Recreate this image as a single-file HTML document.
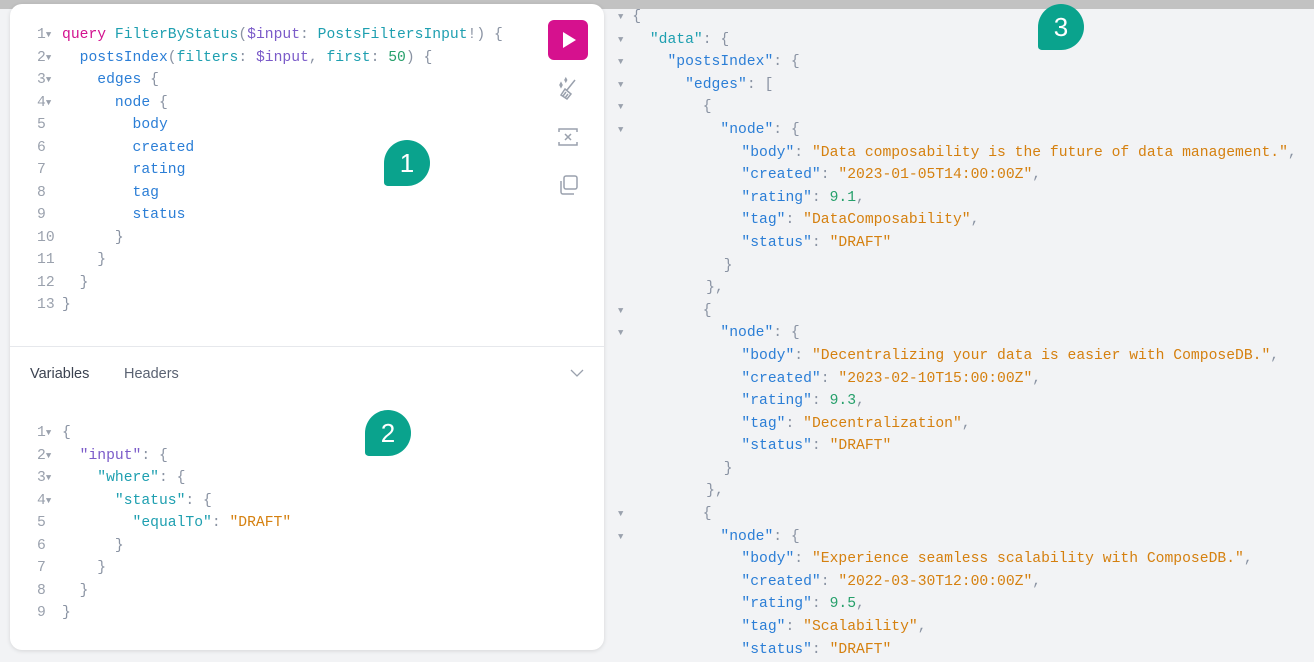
<!DOCTYPE html>
<html><head><style>
body{margin:0;width:1314px;height:662px;background:#f2f3f5;position:relative;overflow:hidden;font-family:"Liberation Sans",sans-serif}
.topbar{position:absolute;left:0;top:0;width:1314px;height:9px;background:#c2c2c2}
.panel{position:absolute;left:10px;top:4px;width:594px;height:646px;background:#fff;border-radius:12px;box-shadow:0 1px 4px rgba(0,0,0,.12)}
.code{position:absolute;font-family:"Liberation Mono",monospace;font-size:14.7px;white-space:pre;line-height:22.5px;color:#8a93a3}
.ln{display:inline-block;width:25px;text-align:left;color:#9aa1ad}
.k{color:#d3128f}.t{color:#1e9fb0}.v{color:#7b5bc9}.f{color:#2b7ed6}.n{color:#26a06b}.s{color:#d5800f}.p{color:#8a93a3}
.tri{font-size:9px;color:#9aa1ad;display:inline-block;line-height:0;vertical-align:top;margin-top:11px}
.right{position:absolute;left:618px;top:6px;font-family:"Liberation Mono",monospace;font-size:14.7px;line-height:22.6px;white-space:pre;color:#8a93a3}
.bubble{position:absolute;width:46px;height:46px;background:#0aa38d;border-radius:50% 50% 50% 8%;color:#fff;font-size:26px;text-align:center;line-height:46px}
.btn{position:absolute;left:548px;top:20px;width:40px;height:40px;background:#d6118e;border-radius:6px}
.tabs{position:absolute;top:366px;font-size:14.5px;color:#3b4250}
</style></head><body>
<div class="topbar"></div>
<div class="panel"></div>
<div style="position:absolute;left:10px;top:346px;width:594px;height:1px;background:#e6e8ec"></div>
<div class="code" style="left:37px;top:24px"><span class="ln">1<span class="tri">▼</span></span><span class="k">query</span> <span class="t">FilterByStatus</span>(<span class="v">$input</span>: <span class="t">PostsFiltersInput</span>!) {
<span class="ln">2<span class="tri">▼</span></span>  <span class="f">postsIndex</span>(<span class="t">filters</span>: <span class="v">$input</span>, <span class="t">first</span>: <span class="n">50</span>) {
<span class="ln">3<span class="tri">▼</span></span>    <span class="f">edges</span> {
<span class="ln">4<span class="tri">▼</span></span>      <span class="f">node</span> {
<span class="ln">5</span>        <span class="f">body</span>
<span class="ln">6</span>        <span class="f">created</span>
<span class="ln">7</span>        <span class="f">rating</span>
<span class="ln">8</span>        <span class="f">tag</span>
<span class="ln">9</span>        <span class="f">status</span>
<span class="ln">10</span>      }
<span class="ln">11</span>    }
<span class="ln">12</span>  }
<span class="ln">13</span>}</div>
<div class="btn"><svg width="40" height="40"><path d="M15 12 L28 20 L15 28Z" fill="#fff"/></svg></div>
<svg style="position:absolute;left:555px;top:76px" width="26" height="26" fill="none" stroke="#9aa1ad" stroke-width="1.5"><path d="M20 4 L12 14 M10 13 L16 18 L12 23 L6 19Z M8 20 L11 16 M10 22 L13 18"/><path d="M5 9 l1-2 1 2-1 2z M10 4 l.8-1.5.8 1.5-.8 1.5z"/></svg>
<svg style="position:absolute;left:556px;top:125px" width="24" height="24" fill="none" stroke="#9aa1ad" stroke-width="1.5"><path d="M3 7V4h18v3 M3 17v3h18v-3 M9 9l6 6 M15 9l-6 6"/></svg>
<svg style="position:absolute;left:556px;top:173px" width="24" height="24" fill="none" stroke="#9aa1ad" stroke-width="1.5"><rect x="8" y="3" width="13" height="13" rx="2"/><path d="M5 8v11a2 2 0 0 0 2 2h11"/></svg>
<div class="tabs" style="left:30px">Variables</div>
<div class="tabs" style="left:124px;color:#5a6272">Headers</div>
<svg style="position:absolute;left:570px;top:368px" width="14" height="10" fill="none" stroke="#9aa1ad" stroke-width="1.3"><path d="M1 2l6 6 6-6"/></svg>
<div class="code" style="left:37px;top:422px"><span class="ln">1<span class="tri">▼</span></span>{
<span class="ln">2<span class="tri">▼</span></span>  <span class="v">"input"</span>: {
<span class="ln">3<span class="tri">▼</span></span>    <span class="t">"where"</span>: {
<span class="ln">4<span class="tri">▼</span></span>      <span class="t">"status"</span>: {
<span class="ln">5</span>        <span class="t">"equalTo"</span>: <span class="s">"DRAFT"</span>
<span class="ln">6</span>      }
<span class="ln">7</span>    }
<span class="ln">8</span>  }
<span class="ln">9</span>}</div>
<div class="right"><span class="tri">▼</span> {
<span class="tri">▼</span>   <span class="t">"data"</span>: {
<span class="tri">▼</span>     <span class="f">"postsIndex"</span>: {
<span class="tri">▼</span>       <span class="f">"edges"</span>: [
<span class="tri">▼</span>         {
<span class="tri">▼</span>           <span class="f">"node"</span>: {
              <span class="f">"body"</span>: <span class="s">"Data composability is the future of data management."</span>,
              <span class="f">"created"</span>: <span class="s">"2023-01-05T14:00:00Z"</span>,
              <span class="f">"rating"</span>: <span class="n">9.1</span>,
              <span class="f">"tag"</span>: <span class="s">"DataComposability"</span>,
              <span class="f">"status"</span>: <span class="s">"DRAFT"</span>
            }
          },
<span class="tri">▼</span>         {
<span class="tri">▼</span>           <span class="f">"node"</span>: {
              <span class="f">"body"</span>: <span class="s">"Decentralizing your data is easier with ComposeDB."</span>,
              <span class="f">"created"</span>: <span class="s">"2023-02-10T15:00:00Z"</span>,
              <span class="f">"rating"</span>: <span class="n">9.3</span>,
              <span class="f">"tag"</span>: <span class="s">"Decentralization"</span>,
              <span class="f">"status"</span>: <span class="s">"DRAFT"</span>
            }
          },
<span class="tri">▼</span>         {
<span class="tri">▼</span>           <span class="f">"node"</span>: {
              <span class="f">"body"</span>: <span class="s">"Experience seamless scalability with ComposeDB."</span>,
              <span class="f">"created"</span>: <span class="s">"2022-03-30T12:00:00Z"</span>,
              <span class="f">"rating"</span>: <span class="n">9.5</span>,
              <span class="f">"tag"</span>: <span class="s">"Scalability"</span>,
              <span class="f">"status"</span>: <span class="s">"DRAFT"</span></div>
<div class="bubble" style="left:384px;top:140px">1</div>
<div class="bubble" style="left:365px;top:410px">2</div>
<div class="bubble" style="left:1038px;top:4px">3</div>
</body></html>
